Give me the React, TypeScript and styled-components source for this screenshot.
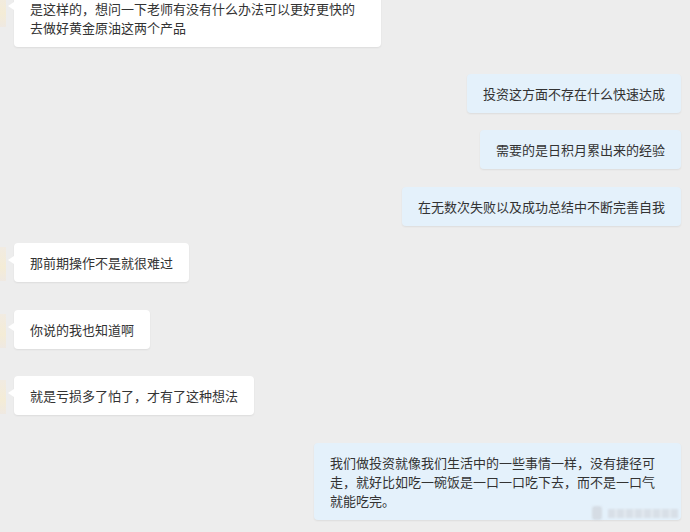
import React from "react";
import styled, { createGlobalStyle } from "styled-components";

const Global = createGlobalStyle`
  html, body {
    margin: 0;
    padding: 0;
    background: #ededed;
    overflow: hidden;
  }
  body {
    font-family: "Noto Sans CJK SC", "Noto Sans", sans-serif;
  }
`;

const Page = styled.div`
  position: relative;
  width: 690px;
  height: 532px;
  overflow: hidden;
  background: #ededed;
`;

const Thread = styled.div`
  display: flex;
  flex-direction: column;
  padding: 0 9px 0 0;
`;

const Row = styled.div<{ $side: "left" | "right"; $top: number }>`
  display: flex;
  align-items: flex-start;
  justify-content: ${(p) => (p.$side === "left" ? "flex-start" : "flex-end")};
  gap: 8px;
  margin-top: ${(p) => p.$top}px;
`;

const Avatar = styled.div`
  flex: none;
  width: 6px;
  height: 34px;
  margin-top: 4px;
  background: linear-gradient(180deg, #f1ebe2 0%, #f4ecd6 60%, #efe9e2 100%);
`;

const Bubble = styled.div<{ $side: "left" | "right" }>`
  position: relative;
  box-sizing: border-box;
  max-width: 367px;
  padding: 10px 16px;
  border-radius: 4px;
  font-size: 13px;
  line-height: 19px;
  color: #333333;
  background: ${(p) => (p.$side === "left" ? "#ffffff" : "#e4f1fb")};
  box-shadow: 0 1px 2px rgba(0, 0, 0, 0.07);
  word-break: break-all;

  ${(p) =>
    p.$side === "left"
      ? `
    &::before {
      content: "";
      position: absolute;
      left: -6px;
      top: 13px;
      width: 0;
      height: 0;
      border-top: 4px solid transparent;
      border-bottom: 4px solid transparent;
      border-right: 6px solid #ffffff;
    }
  `
      : ""}
`;

const Watermark = styled.div`
  position: absolute;
  right: 12px;
  bottom: 12px;
  display: flex;
  align-items: center;
  gap: 6px;
  filter: blur(1.2px);
  opacity: 0.55;
`;

const WmLogo = styled.div`
  width: 10px;
  height: 14px;
  border-radius: 3px;
  background: #c9ccd2;
`;

const WmText = styled.div`
  width: 70px;
  height: 9px;
  background: repeating-linear-gradient(90deg, #cfd2d8 0 7px, #e3e6ea 7px 9px);
`;

type Msg = { side: "left" | "right"; top: number; text: string };

const messages: Msg[] = [
  {
    side: "left",
    top: -11,
    text: "是这样的，想问一下老师有没有什么办法可以更好更快的去做好黄金原油这两个产品",
  },
  { side: "right", top: 27, text: "投资这方面不存在什么快速达成" },
  { side: "right", top: 17, text: "需要的是日积月累出来的经验" },
  { side: "right", top: 18, text: "在无数次失败以及成功总结中不断完善自我" },
  { side: "left", top: 17, text: "那前期操作不是就很难过" },
  { side: "left", top: 28, text: "你说的我也知道啊" },
  { side: "left", top: 27, text: "就是亏损多了怕了，才有了这种想法" },
  {
    side: "right",
    top: 28,
    text: "我们做投资就像我们生活中的一些事情一样，没有捷径可走，就好比如吃一碗饭是一口一口吃下去，而不是一口气就能吃完。",
  },
];

export default function App() {
  return (
    <Page>
      <Global />
      <Thread>
        {messages.map((m, i) => (
          <Row key={i} $side={m.side} $top={m.top}>
            {m.side === "left" && <Avatar />}
            <Bubble $side={m.side}>{m.text}</Bubble>
          </Row>
        ))}
      </Thread>
      <Watermark>
        <WmLogo />
        <WmText />
      </Watermark>
    </Page>
  );
}
